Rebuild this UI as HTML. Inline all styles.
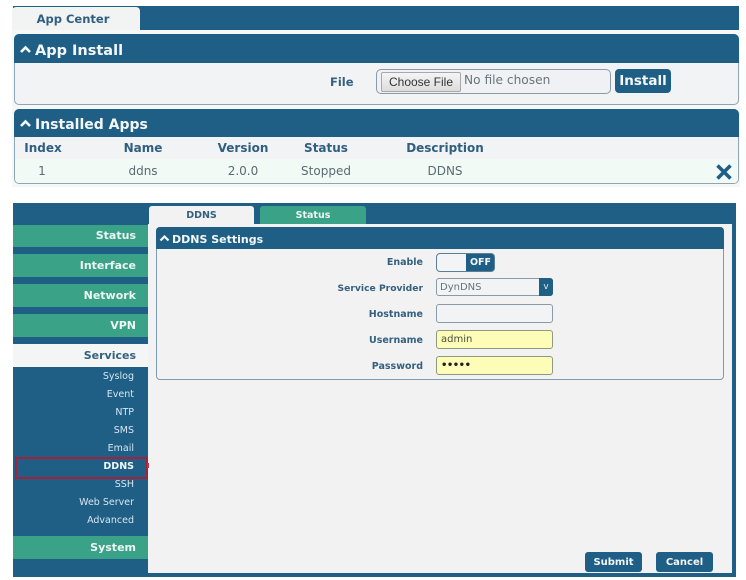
<!DOCTYPE html>
<html><head><meta charset="utf-8"><style>
html,body{margin:0;padding:0}
body{width:746px;height:580px;background:#fff;position:relative;overflow:hidden;font-family:"DejaVu Sans",sans-serif;filter:blur(.3px)}
div,span{position:absolute;box-sizing:border-box;white-space:nowrap}
.d{background:#1f5f86}
.g{background:#3aa287}
.hd{color:#f4f7f8;font-weight:bold}
.l{color:#34607f;font-weight:bold;font-size:9.500px;line-height:14px;text-align:right;left:280px;width:143px}
.th{color:#2f5f80;font-weight:bold;font-size:12px;line-height:16px;top:140px;transform:translateX(-50%)}
.td{color:#5b6b72;font-size:12px;line-height:16px;top:163px;transform:translateX(-50%)}
.m{left:13px;width:135px;height:22px;text-align:right;padding-right:12px;color:#eef6f3;font-weight:bold;font-size:11px;line-height:22px}
.s{left:13px;width:121px;text-align:right;color:#d8e6ee;font-size:9.500px;line-height:14px}
.i{left:436px;width:117px;height:19px;border:1px solid #8a9aa6;border-radius:3px;background:#f1f3f5;font-size:10px;line-height:18px;padding-left:4px;color:#55636b}
.y{background:#fdfdb8;border-color:#8c9a80}
.b{background:#1f5f86;color:#f2f6f8;font-weight:bold;font-size:10px;border-radius:3px;text-align:center;line-height:22px;top:552px;width:57px;height:20px}
svg{position:absolute}
</style></head><body>

<div class="d" style="left:13px;top:6px;width:726px;height:24px"></div>
<div style="left:12px;top:7px;width:128px;height:23px;background:#f2f3f3;border-radius:4px 4px 0 0;color:#2f5f80;font-weight:bold;font-size:11.500px;line-height:25px;text-align:center;padding-right:6px">App Center</div>
<div style="left:12px;top:30px;width:728px;height:157px;background:#f6f8f7"></div>

<div style="left:14px;top:34px;width:725px;height:71px;background:#f2f3f4;border:1px solid #8fa5b3;border-radius:5px"></div>
<div class="d" style="left:14px;top:34px;width:725px;height:29px;border-radius:5px 5px 0 0"></div>
<svg style="left:19px;top:45px" width="13" height="9" viewBox="0 0 13 9"><path d="M2 7L6.500 2.500L11 7" fill="none" stroke="#f4f7f8" stroke-width="2.600"/></svg>
<div class="hd" style="left:35px;top:42px;font-size:14.500px;line-height:18px">App Install</div>
<div style="left:330px;top:74px;color:#34607f;font-weight:bold;font-size:11.500px;line-height:16px">File</div>
<div style="left:376px;top:69px;width:235px;height:25px;border:1px solid #8a9aa6;border-radius:5px;background:#eff1f4"></div>
<div style="left:381px;top:72px;width:80px;height:20px;background:linear-gradient(#f5f5f5,#dcdcdc);border:1px solid #a8a8a8;border-radius:2px;color:#333;font-family:'Liberation Sans',sans-serif;font-size:12px;line-height:18px;text-align:center">Choose File</div>
<div style="left:464px;top:72px;color:#68757d;font-size:12.200px;line-height:16px">No file chosen</div>
<div style="left:615px;top:69px;width:56px;height:24px;background:#1f5f86;border-radius:4px;color:#f4f7f8;font-weight:bold;font-size:13.500px;line-height:25px;text-align:center">Install</div>

<div style="left:14px;top:109px;width:725px;height:75px;background:#f2f3f4;border:1px solid #8fa5b3;border-radius:5px"></div>
<div style="left:15px;top:159px;width:723px;height:24px;background:#f2faf5;border-radius:0 0 4px 4px"></div>
<div class="d" style="left:14px;top:109px;width:725px;height:28px;border-radius:5px 5px 0 0"></div>
<svg style="left:19px;top:119px" width="13" height="9" viewBox="0 0 13 9"><path d="M2 7L6.500 2.500L11 7" fill="none" stroke="#f4f7f8" stroke-width="2.600"/></svg>
<div class="hd" style="left:35px;top:116px;font-size:14px;line-height:18px">Installed Apps</div>
<div class="th" style="left:43px">Index</div>
<div class="th" style="left:143px">Name</div>
<div class="th" style="left:243px">Version</div>
<div class="th" style="left:326px">Status</div>
<div class="th" style="left:445px">Description</div>
<div class="td" style="left:42px">1</div>
<div class="td" style="left:143px">ddns</div>
<div class="td" style="left:243px">2.0.0</div>
<div class="td" style="left:326px">Stopped</div>
<div class="td" style="left:445px">DDNS</div>
<svg style="left:715px;top:163px" width="18" height="18" viewBox="0 0 18 18"><path d="M2.500 2.500L15.500 15.500M15.500 2.500L2.500 15.500" stroke="#1f5f86" stroke-width="3.600" fill="none"/></svg>

<div class="d" style="left:13px;top:203px;width:723px;height:374px"></div>
<div style="left:148px;top:224px;width:584px;height:349px;background:#f2f2f3"></div>
<div style="left:149px;top:206px;width:105px;height:19px;background:#f2f2f3;border-radius:3px 3px 0 0;color:#34607f;font-weight:bold;font-size:9.500px;line-height:20px;text-align:center">DDNS</div>
<div class="g" style="left:260px;top:206px;width:106px;height:18px;border-radius:3px 3px 0 0;color:#eef6f3;font-weight:bold;font-size:9.500px;line-height:20px;text-align:center">Status</div>

<div class="m g" style="top:225px">Status</div>
<div class="m g" style="top:254px;height:23px;line-height:24px">Interface</div>
<div class="m g" style="top:284px;height:23px;line-height:24px">Network</div>
<div class="m g" style="top:314px;height:23px;line-height:23px">VPN</div>
<div class="m" style="top:344px;height:23px;line-height:24px;background:#f4f5f5;color:#34607f">Services</div>
<div class="s" style="top:370px">Syslog</div>
<div class="s" style="top:388px">Event</div>
<div class="s" style="top:406px">NTP</div>
<div class="s" style="top:424px">SMS</div>
<div class="s" style="top:442px">Email</div>
<div class="s" style="top:460px;color:#f2f6f8;font-weight:bold">DDNS</div>
<div class="s" style="top:478px">SSH</div>
<div class="s" style="top:496px">Web Server</div>
<div class="s" style="top:514px">Advanced</div>
<div style="left:15px;top:457px;width:133px;height:22px;border:2px solid #a3213a"></div>
<div style="left:147px;top:463px;width:2px;height:5px;background:#c0344e"></div>
<div class="m g" style="top:536px;height:23px;line-height:24px">System</div>

<div style="left:156px;top:227px;width:568px;height:153px;background:#f2f2f3;border:1px solid #7f9cac;border-radius:4px"></div>
<div class="d" style="left:156px;top:227px;width:568px;height:22px;border-radius:4px 4px 0 0"></div>
<svg style="left:159px;top:234px" width="11" height="8" viewBox="0 0 11 8"><path d="M1.500 6.500L5.500 2.500L9.500 6.500" fill="none" stroke="#f4f7f8" stroke-width="2.200"/></svg>
<div class="hd" style="left:172px;top:233px;font-size:11px;line-height:14px">DDNS Settings</div>

<div class="l" style="top:256px">Enable</div>
<div class="l" style="top:282px;font-size:9.200px">Service Provider</div>
<div class="l" style="top:308px">Hostname</div>
<div class="l" style="top:334px">Username</div>
<div class="l" style="top:360px">Password</div>

<div style="left:436px;top:253px;width:59px;height:19px;border:1px solid #5a7f98;border-radius:4px;background:#1f5f86"></div>
<div style="left:437px;top:254px;width:29px;height:17px;border-radius:3px 0 0 3px;background:#f3f4f5"></div>
<div style="left:466px;top:253px;width:29px;height:19px;color:#f2f6f8;font-weight:bold;font-size:9.500px;line-height:20px;text-align:center">OFF</div>

<div class="i" style="top:278px;height:18px;line-height:17px;padding-left:3px;color:#66747c">DynDNS</div>
<div style="left:539px;top:278px;width:14px;height:18px;background:#1f5f86;border-radius:0 3px 3px 0;color:#dfe9ee;font-size:9px;line-height:18px;text-align:center">v</div>
<div class="i" style="top:304px"></div>
<div class="i y" style="top:330px;color:#4a4f3a">admin</div>
<div class="i y" style="top:356px;color:#222;font-size:10px;font-weight:bold;letter-spacing:-.5px">•••••</div>

<div class="b" style="left:585px">Submit</div>
<div class="b" style="left:656px">Cancel</div>
</body></html>
